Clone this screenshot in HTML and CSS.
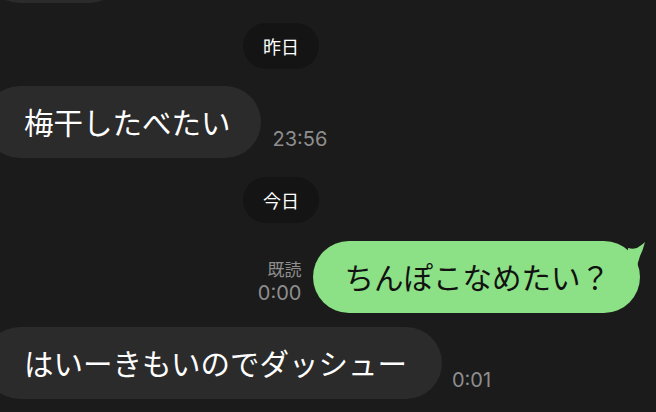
FILE: index.html
```html
<!DOCTYPE html>
<html lang="ja">
<head>
<meta charset="utf-8">
<link rel="stylesheet" href="styles.css">
</head>
<body>
<div class="chat">
  <div class="row row-left row-partial">
    <div class="bubble bubble-in bubble-partial"></div>
  </div>
  <div class="day day-yesterday"><span class="pill">昨日</span></div>
  <div class="row row-left row-1">
    <div class="bubble bubble-in">梅干したべたい</div>
    <div class="meta"><span class="time">23:56</span></div>
  </div>
  <div class="day day-today"><span class="pill">今日</span></div>
  <div class="row row-right row-2">
    <div class="meta meta-out"><span class="read">既読</span><span class="time">0:00</span></div>
    <div class="bubble bubble-out">ちんぽこなめたい？
      <svg class="tail" width="20" height="30" viewBox="0 0 20 30"><path d="M0 30 L0 6 Q8 8 12 4 Q15 2 17 0 Q15 8 12 14 Q10 20 8 28 Z" fill="#8ce085"/></svg>
    </div>
  </div>
  <div class="row row-left row-3">
    <div class="bubble bubble-in bubble-wide">はいーきもいのでダッシュー</div>
    <div class="meta meta-2"><span class="time">0:01</span></div>
  </div>
</div>
</body>
</html>
```
FILE: styles.css
```css
html, body {
  margin: 0;
  padding: 0;
  background: #1b1b1b;
  width: 656px;
  height: 412px;
  overflow: hidden;
}
.chat {
  display: flex;
  flex-direction: column;
  font-family: "Noto Sans CJK JP", "Noto Sans", sans-serif;
}
.row {
  display: flex;
  align-items: flex-end;
}
.row-right {
  justify-content: flex-end;
  padding-right: 16px;
}
.bubble {
  height: 72px;
  border-radius: 36px;
  display: flex;
  align-items: center;
  font-size: 29.5px;
  line-height: 1;
  white-space: nowrap;
  position: relative;
}
.bubble-in {
  background: #2b2b2b;
  color: #fff;
  margin-left: -16px;
  padding: 0 30px 0 40px;
}
.bubble-wide {
  padding-right: 35px;
}
.bubble-partial {
  width: 71px;
  padding: 0 35px;
}
.row-partial {
  margin-top: -69px;
}
.bubble-out {
  background: #8ce085;
  color: #111;
  padding: 0 30px 0 31px;
}
.tail {
  position: absolute;
  right: -8px;
  top: 1px;
}
.day {
  display: flex;
  justify-content: center;
  width: 562px;
}
.pill {
  display: flex;
  align-items: center;
  justify-content: center;
  width: 76px;
  height: 46px;
  border-radius: 23px;
  background: #141414;
  color: #fff;
  font-size: 18px;
  line-height: 1;
}
.day-yesterday { margin-top: 20px; }
.row-1 { margin-top: 17px; }
.day-today { margin-top: 19px; }
.row-2 { margin-top: 18px; }
.row-3 { margin-top: 14px; }
.meta {
  display: flex;
  flex-direction: column;
  align-items: flex-end;
  margin-left: 12px;
  margin-bottom: 9px;
  color: #8e8e8e;
}
.meta-out {
  margin-left: 0;
  margin-right: 12px;
  margin-bottom: 10px;
}
.meta-2 {
  margin-left: 10px;
}
.time {
  font-family: Inter, "Noto Sans", sans-serif;
  font-size: 20px;
  line-height: 20px;
}
.read {
  font-size: 17px;
  line-height: 17px;
  margin-bottom: 6px;
}
```
